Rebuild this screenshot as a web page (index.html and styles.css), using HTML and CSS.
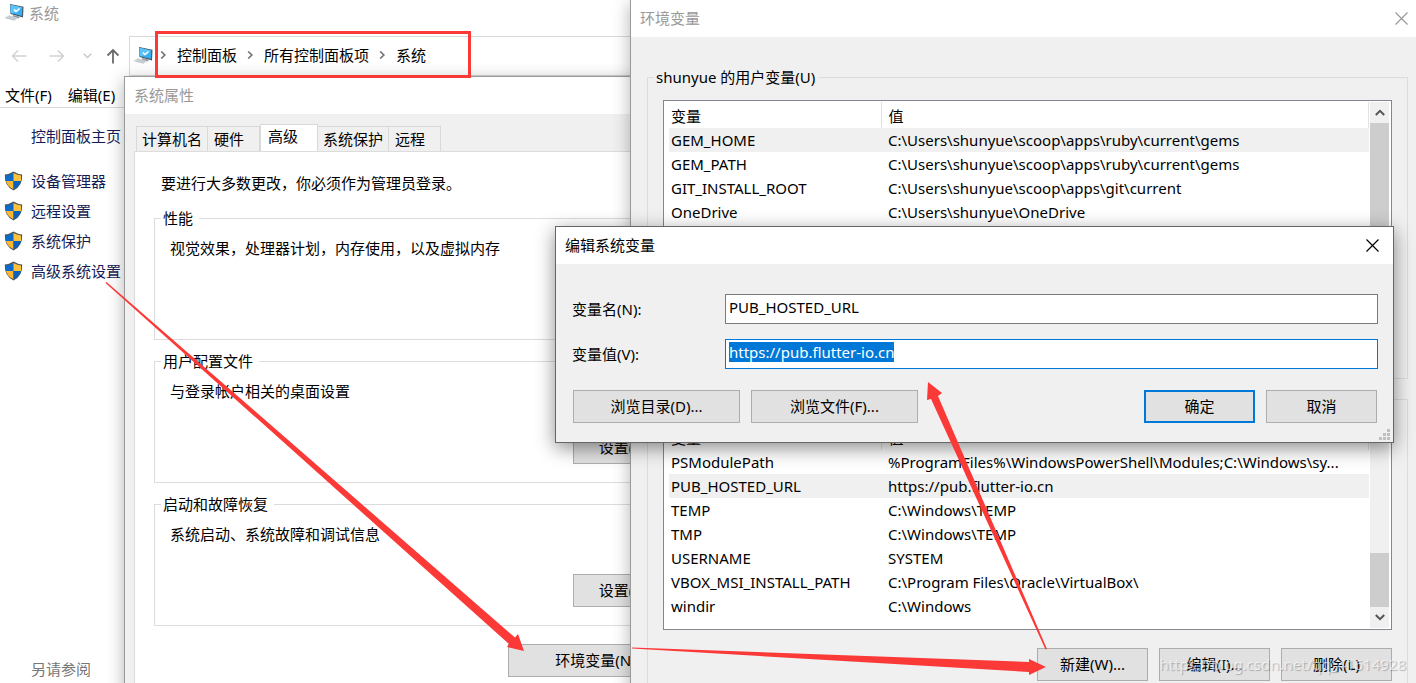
FILE: index.html
```html
<!DOCTYPE html>
<html lang="zh-CN">
<head>
<meta charset="utf-8">
<title>系统</title>
<link rel="stylesheet" href="styles.css">
</head>
<body>
<svg class="defs" width="0" height="0" aria-hidden="true">
  <symbol id="pc" viewBox="0 0 20 17">
    <path d="M6 0 L19.500 2.800 L19 13.500 L6.500 10 Z" fill="#4a565f"/>
    <path d="M6.500 0.700 L18.300 3.400 L18 12 L6.800 9 Z" fill="#35aef5"/>
    <path d="M6.500 0.700 L18.300 3.400 L9 9.600 L6.800 9 Z" fill="#5cc3fa"/>
    <path d="M10 5.500 L12 7.800 L15.500 4.600" fill="none" stroke="#fff" stroke-width="1.500"/>
    <path d="M9 11 L16 12.800 L14.500 14.400 L9 13 Z" fill="#8f989e"/>
    <path d="M0 14 L5 11.200 L14 14 L10.500 16.800 Z" fill="#d3d8dc"/>
    <path d="M2.500 13.800 L10.500 15.900 M4.500 12.500 L12 14.600" stroke="#b3bac0" stroke-width="0.700"/>
  </symbol>
  <symbol id="shield" viewBox="0 0 19 20">
    <path d="M9.500 0.500 Q5 3.300 0.800 3.500 Q0.200 15 9.500 19.500 Q18.800 15 18.200 3.500 Q14 3.300 9.500 0.500 Z" fill="#51565a"/>
    <path d="M9.500 2 Q5.500 4.300 2 4.600 L2 10 L9.500 10 Z" fill="#0a6bcb"/>
    <path d="M9.500 2 Q13.500 4.300 17 4.600 L17 10 L9.500 10 Z" fill="#ffc03a"/>
    <path d="M2 10 L9.500 10 L9.500 18.200 Q3 15 2 10 Z" fill="#ffb52e"/>
    <path d="M17 10 L9.500 10 L9.500 18.200 Q16 15 17 10 Z" fill="#0a62bd"/>
  </symbol>
  <symbol id="chevron" viewBox="0 0 7 8"><path d="M1.200 0.500 L4.800 4 L1.200 7.500" fill="none" stroke="#757575" stroke-width="1.700"/></symbol>
  <symbol id="close" viewBox="0 0 13 13"><path d="M0.500 0.500 L12.500 12.500 M12.500 0.500 L0.500 12.500" stroke="currentColor" stroke-width="1.200"/></symbol>
</svg>

<main class="desktop">
  <section class="explorer">
    <header class="explorer-title"><svg class="pc"><use href="#pc"/></svg><span>系统</span></header>
    <div class="nav">
      <div class="nav-buttons">
        <svg width="16" height="14" viewBox="0 0 16 14"><path d="M15.500 7 H1.500 M7 1.500 L1.500 7 L7 12.500" fill="none" stroke="#d2d2d2" stroke-width="1.500"/></svg>
        <svg width="16" height="14" viewBox="0 0 16 14"><path d="M0.500 7 H14.500 M9 1.500 L14.500 7 L9 12.500" fill="none" stroke="#d2d2d2" stroke-width="1.500"/></svg>
        <svg width="9" height="6" viewBox="0 0 9 6"><path d="M0.700 0.700 L4.500 4.500 L8.300 0.700" fill="none" stroke="#c8c8c8" stroke-width="1.500"/></svg>
        <svg width="14" height="16" viewBox="0 0 14 16"><path d="M7 15.500 V2 M1.500 7.500 L7 2 L12.500 7.500" fill="none" stroke="#6a6a6a" stroke-width="1.800"/></svg>
      </div>
      <nav class="address">
        <svg class="pc"><use href="#pc"/></svg>
        <svg class="chev"><use href="#chevron"/></svg><a href="#">控制面板</a>
        <svg class="chev"><use href="#chevron"/></svg><a href="#">所有控制面板项</a>
        <svg class="chev"><use href="#chevron"/></svg><a href="#">系统</a>
      </nav>
    </div>
    <div class="menu"><a href="#">文件(F)</a><a href="#">编辑(E)</a></div>
    <aside class="side">
      <a class="home" href="#">控制面板主页</a>
      <a href="#"><svg class="shield"><use href="#shield"/></svg>设备管理器</a>
      <a href="#"><svg class="shield"><use href="#shield"/></svg>远程设置</a>
      <a href="#"><svg class="shield"><use href="#shield"/></svg>系统保护</a>
      <a href="#"><svg class="shield"><use href="#shield"/></svg>高级系统设置</a>
      <p class="see-also">另请参阅</p>
    </aside>
  </section>

  <section class="window props">
    <header class="titlebar inactive"><span>系统属性</span></header>
    <div class="props-body">
      <div class="tabs" role="tablist">
        <button class="tab" role="tab">计算机名</button><button class="tab wide" role="tab">硬件</button><button class="tab active" role="tab" aria-selected="true">高级</button><button class="tab" role="tab">系统保护</button><button class="tab wide" role="tab">远程</button>
      </div>
      <div class="panel">
        <p class="notice">要进行大多数更改，你必须作为管理员登录。</p>
        <fieldset class="group option"><legend>性能</legend><p>视觉效果，处理器计划，内存使用，以及虚拟内存</p><button class="btn set">设置(S)...</button></fieldset>
        <fieldset class="group option"><legend>用户配置文件</legend><p>与登录帐户相关的桌面设置</p><button class="btn set">设置(E)...</button></fieldset>
        <fieldset class="group option"><legend>启动和故障恢复</legend><p>系统启动、系统故障和调试信息</p><button class="btn set">设置(T)...</button></fieldset>
        <button class="btn env-btn">环境变量(N)...</button>
      </div>
    </div>
  </section>

  <section class="window env">
    <header class="titlebar inactive"><span>环境变量</span><button class="close" aria-label="关闭"><svg><use href="#close"/></svg></button></header>
    <div class="env-body">
      <fieldset class="group vars">
        <legend>shunyue 的用户变量(U)</legend>
        <div class="list">
          <table>
            <thead><tr><th class="name">变量</th><th>值</th></tr></thead>
            <tbody>
              <tr class="sel"><td>GEM_HOME</td><td>C:\Users\shunyue\scoop\apps\ruby\current\gems</td></tr>
              <tr><td>GEM_PATH</td><td>C:\Users\shunyue\scoop\apps\ruby\current\gems</td></tr>
              <tr><td>GIT_INSTALL_ROOT</td><td>C:\Users\shunyue\scoop\apps\git\current</td></tr>
              <tr><td>OneDrive</td><td>C:\Users\shunyue\OneDrive</td></tr>
            </tbody>
          </table>
          <div class="scroll">
            <svg class="arrow" viewBox="0 0 10 7"><path d="M0.800 6 L5 1.800 L9.200 6" fill="none" stroke="#555" stroke-width="2"/></svg>
            <div class="thumb tall"></div>
          </div>
        </div>
        <div class="actions"><button class="btn">新建(N)...</button><button class="btn">编辑(E)...</button><button class="btn">删除(D)</button></div>
      </fieldset>
      <fieldset class="group vars">
        <legend>系统变量(S)</legend>
        <div class="list">
          <table>
            <thead><tr><th class="name">变量</th><th>值</th></tr></thead>
            <tbody>
              <tr><td>PSModulePath</td><td>%ProgramFiles%\WindowsPowerShell\Modules;C:\Windows\sy...</td></tr>
              <tr class="sel"><td>PUB_HOSTED_URL</td><td>https://pub.flutter-io.cn</td></tr>
              <tr><td>TEMP</td><td>C:\Windows\TEMP</td></tr>
              <tr><td>TMP</td><td>C:\Windows\TEMP</td></tr>
              <tr><td>USERNAME</td><td>SYSTEM</td></tr>
              <tr><td>VBOX_MSI_INSTALL_PATH</td><td>C:\Program Files\Oracle\VirtualBox\</td></tr>
              <tr><td>windir</td><td>C:\Windows</td></tr>
            </tbody>
          </table>
          <div class="scroll end">
            <div class="thumb"></div>
            <svg class="arrow" viewBox="0 0 10 7"><path d="M0.800 1 L5 5.200 L9.200 1" fill="none" stroke="#555" stroke-width="2"/></svg>
          </div>
        </div>
        <div class="actions"><button class="btn">新建(W)...</button><button class="btn">编辑(I)...</button><button class="btn">删除(L)</button></div>
      </fieldset>
    </div>
  </section>

  <section class="window dialog" role="dialog" aria-label="编辑系统变量">
    <header class="titlebar"><span>编辑系统变量</span><button class="close" aria-label="关闭"><svg><use href="#close"/></svg></button></header>
    <form class="form">
      <div class="field"><label for="vname">变量名(N):</label><input id="vname" type="text" value="PUB_HOSTED_URL"></div>
      <div class="field"><label for="vvalue">变量值(V):</label><input id="vvalue" type="text" value="https://pub.flutter-io.cn" autofocus></div>
      <div class="form-actions">
        <button type="button" class="btn browse">浏览目录(D)...</button>
        <button type="button" class="btn browse">浏览文件(F)...</button>
        <button type="button" class="btn default">确定</button>
        <button type="button" class="btn">取消</button>
      </div>
    </form>
    <svg class="grip" width="11" height="11" viewBox="0 0 11 11"><path d="M8 0h3v3h-3z M4 4h3v3h-3z M8 4h3v3h-3z M0 8h3v3h-3z M4 8h3v3h-3z M8 8h3v3h-3z" fill="#bfbfbf"/></svg>
  </section>

  <svg class="marks" width="1416" height="683" viewBox="0 0 1416 683" aria-hidden="true">
    <rect x="156.500" y="32.500" width="313" height="44" fill="none" stroke="#fb3a38" stroke-width="3"/>
    <g fill="#fb3a38">
      <path d="M105.500 283 L106.500 282 L515 637.500 L518 634 L524 651 L507 647 L509 644 Z"/>
      <path d="M632 647.500 L1029 662 L1029 659 L1046 667 L1029 675 L1029 672 L632 648.500 Z"/>
      <path d="M1045.500 649.500 L931 399 L927 400 L928 382 L942 393 L938 396 L1047 649 Z"/>
    </g>
  </svg>
  <p class="watermark">https://blog.csdn.net/qq_41614928</p>
</main>
<script src="select.js"></script>
</body>
</html>
```

FILE: select.js
```js
const value = document.getElementById("vvalue");
value.focus();
value.select();
```

FILE: styles.css
```css
* { box-sizing: border-box; }
body {
  margin: 0;
  font: 15px/20px "Noto Sans", "Noto Sans CJK SC", sans-serif;
  color: #000;
  background: #fff;
}
p { margin: 0; }
a { color: inherit; text-decoration: none; }
button, input { font: inherit; color: inherit; }
.defs { position: absolute; }
.desktop { position: relative; height: 100vh; overflow: hidden; }

.explorer { display: flex; flex-direction: column; height: 100%; }
.explorer-title { display: flex; align-items: center; gap: 5px; height: 25px; padding-left: 4px; color: #999; }
.pc { width: 20px; height: 17px; }
.nav { display: flex; margin-top: 11px; height: 40px; }
.nav-buttons { display: flex; align-items: center; width: 129px; padding-left: 11px; }
.nav-buttons svg:nth-child(2) { margin-left: 22px; }
.nav-buttons svg:nth-child(3) { margin-left: 18px; }
.nav-buttons svg:nth-child(4) { margin-left: 14px; }
.address { display: flex; align-items: center; flex: 1; padding: 0 0 2px 3px; border: 1px solid #d9d9d9; }
.chev { width: 7px; height: 8px; margin: 0 10px; }
.address .pc + .chev { margin-left: 7px; }
.menu { display: flex; gap: 16px; height: 32px; padding: 9px 0 0 5px; border-bottom: 1px solid #d9d9d9; }
.side { flex: 1; display: flex; flex-direction: column; gap: 10px; padding: 18px 0 4px 4px; color: #151c55; }
.side a { display: flex; align-items: center; gap: 8px; }
.side .home { padding-left: 27px; margin-bottom: 15px; }
.shield { width: 19px; height: 20px; }
.see-also { margin-top: auto; padding-left: 27px; color: #777; }

.window { position: absolute; border: 1px solid #9a9a9a; background: #f0f0f0; box-shadow: 0 4px 16px rgba(0, 0, 0, .3); }
.titlebar { display: flex; align-items: center; justify-content: space-between; height: 37px; padding: 0 14px 0 9px; background: #fff; }
.titlebar span { padding-bottom: 2px; }
.inactive { color: #999; }
.close { display: flex; padding: 0; border: 0; background: none; }
.close svg { width: 13px; height: 13px; }

.btn { min-width: 111px; height: 33px; padding: 0 8px 2px; border: 1px solid #adadad; background: #e1e1e1; white-space: nowrap; }
.group { min-width: 0; margin: 0; border: 1px solid #dcdcdc; }
.group legend { height: 20px; margin: 0; }

.props { left: 124px; top: 76px; width: 601px; }
.props-body { padding: 10px 9px; }
.tabs { display: flex; align-items: flex-end; padding-left: 2px; }
.tab { height: 25px; padding: 0 5px; border: 1px solid #d9d9d9; border-bottom: 0; background: #f0f0f0; }
.tab + .tab { border-left: 0; }
.tab.wide { padding: 0 15px 0 6px; }
.tab.active { height: 27px; padding: 0 19px 4px 7px; background: #fff; border-left: 1px solid #d9d9d9; }
.panel { display: flex; flex-direction: column; gap: 11px; padding: 21px 19px; border: 1px solid #dcdcdc; background: #fff; }
.notice { padding: 0 7px; margin-bottom: 4px; }
.option { height: 132px; padding: 10px 10px 0 15px; }
.option legend { padding: 0 6px 0 2px; margin-left: -9px; }
.set { display: block; margin: 30px 0 0 auto; }
.env-btn { width: 187px; align-self: flex-end; margin-top: 7px; }

.env { left: 630px; top: -1px; right: -1px; }
.env .titlebar { padding-right: 8px; }
.env-body { display: flex; flex-direction: column; gap: 10px; padding: 30px 8px 20px 16px; }
.vars { padding: 13px 15px 19px; }
.vars legend { padding: 0 4px 0 2px; margin-left: -9px; }
.list { display: flex; height: 208px; padding: 1px 2px 1px 5px; border: 1px solid #828790; background: #fff; }
table { flex: 1; align-self: flex-start; width: 0; table-layout: fixed; border-collapse: collapse; }
th, td { height: 24px; padding: 0 6px 0 7px; text-align: left; font-weight: 400; overflow: hidden; white-space: nowrap; text-overflow: ellipsis; }
th { height: 26px; padding-top: 1px; border-right: 1px solid #e3e3e3; }
.name { width: 212px; }
th:first-child, td:first-child { padding-left: 2px; }
.sel { background: #f0f0f0; }
.scroll { display: flex; flex-direction: column; align-items: center; width: 19px; margin-left: 1px; background: #f0f0f0; }
.arrow { width: 10px; height: 7px; margin: 7px 0; }
.thumb { width: 100%; height: 54px; background: #cdcdcd; }
.thumb.tall { height: 150px; }
.scroll.end { justify-content: flex-end; }
.actions { display: flex; justify-content: flex-end; gap: 11px; margin-top: 18px; }

.dialog { left: 555px; top: 226px; right: 22px; border-color: #666; box-shadow: 0 5px 18px rgba(0, 0, 0, .45); }
.form { display: flex; flex-direction: column; gap: 15px; padding: 30px 15px 19px 16px; }
.field { display: flex; align-items: center; }
.field label { width: 153px; }
.field input { flex: 1; height: 30px; padding: 2px 3px 6px; border: 1px solid #7a7a7a; border-radius: 0; background: #fff; outline: 0; }
.field input:focus { border-color: #0078d7; }
.field input::selection { background: #0078d7; color: #fff; }
.form-actions { display: flex; gap: 11px; margin-top: 6px; padding: 0 1px; }
.browse { width: 167px; }
.default { margin-left: auto; border: 2px solid #0078d7; }
.grip { position: absolute; right: 3px; bottom: 2px; }

.marks { position: absolute; left: 0; top: 0; pointer-events: none; }
.watermark { position: absolute; right: 10px; bottom: 9px; color: rgba(255, 255, 255, .6); text-shadow: 1px 1px 1px rgba(0, 0, 0, .25); pointer-events: none; }
```
